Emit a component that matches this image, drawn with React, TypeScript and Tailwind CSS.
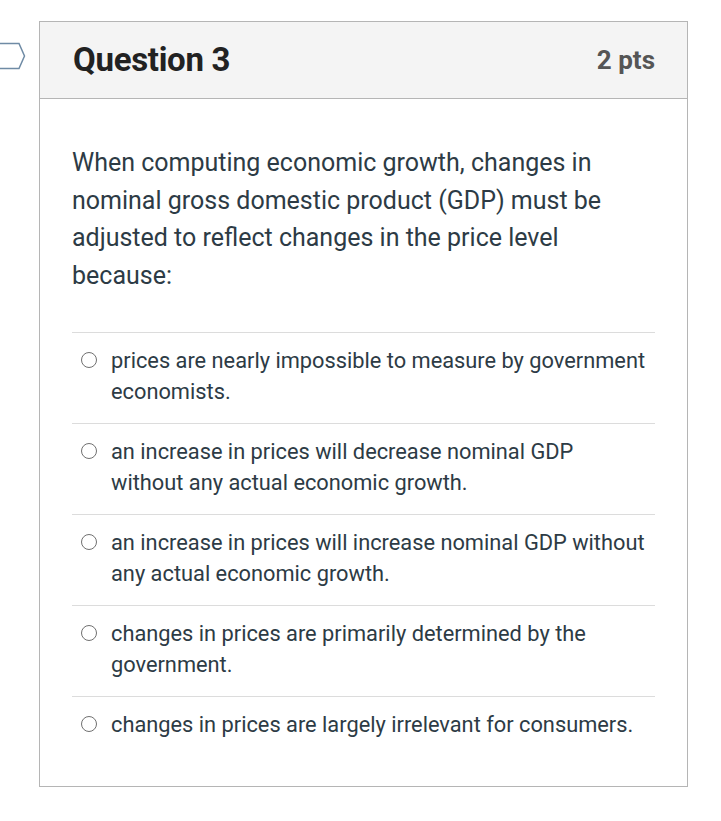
const answers = [
  "prices are nearly impossible to measure by government economists.",
  "an increase in prices will decrease nominal GDP without any actual economic growth.",
  "an increase in prices will increase nominal GDP without any actual economic growth.",
  "changes in prices are primarily determined by the government.",
  "changes in prices are largely irrelevant for consumers.",
]

export default function App() {
  return (
    <div className="relative min-h-[821px] w-[721px] bg-white pt-[21px] pl-[39px] font-['Roboto',sans-serif] text-[#2d3b45]">
      {/* bookmark tag on the left edge */}
      <svg className="absolute left-0 top-[42px]" width="26" height="28" viewBox="0 0 26 28">
        <path d="M-2 1.5 H19 L24.5 14 L19 26.5 H-2" fill="none" stroke="#6f8ba5" strokeWidth="1.5" />
      </svg>

      <div className="w-[649px] border border-[#b5b5b5]">
        <div className="flex h-[77px] items-center justify-between border-b border-[#b5b5b5] bg-[#f4f4f4] pl-[33px] pr-[32px]">
          <h2 className="text-[33px] font-bold tracking-[-0.3px] text-[#222]">Question 3</h2>
          <span className="text-[26px] font-bold text-[#555]">2 pts</span>
        </div>

        <div className="px-[32px] pt-[45px] pb-[30px]">
          <p className="pr-[20px] text-[25px] leading-[37.5px]">
            When computing economic growth, changes in nominal gross domestic product (GDP) must be adjusted to reflect changes in the price level because:
          </p>

          <div className="mt-[38px]">
            {answers.map((a, i) => (
              <div
                key={i}
                className="flex items-start gap-[14px] border-t border-[#dcdcdc] pl-[9px] pr-[6px] pt-[12px] pb-[16px] min-h-[90.75px] last:min-h-0"
              >
                <span className="mt-[7px] h-[16px] w-[16px] shrink-0 rounded-full border-[1.5px] border-[#707070] bg-white"></span>
                <span className="text-[21.8px] leading-[31px]">{a}</span>
              </div>
            ))}
          </div>
        </div>
      </div>
    </div>
  )
}
